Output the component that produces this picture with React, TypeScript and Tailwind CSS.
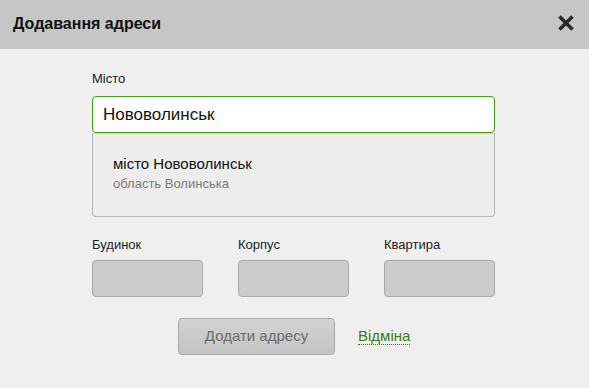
import React from 'react';

const font = { fontFamily: '"Liberation Sans", Arial, sans-serif' };

const SmallField: React.FC<{ label: string }> = ({ label }) => (
  <div className="flex flex-col w-[111px]">
    <div className="text-[13px] text-[#222] leading-[16px] h-[16px] mt-[1px]">{label}</div>
    <div className="mt-[7px] h-[37px] rounded-[4px] border border-[#a9a9a9] bg-[#cccccc]" />
  </div>
);

export default function App() {
  return (
    <div style={font} className="w-[589px] h-[388px] bg-[#efefef] flex flex-col overflow-hidden">
      <div className="h-[49px] bg-[#c6c6c6] flex items-center justify-between pl-[13px] pr-[14px]">
        <div className="text-[16px] font-bold text-[#111] mt-[-2px]">Додавання адреси</div>
        <svg width="18" height="18" viewBox="0 0 18 18" className="mt-[-3px]">
          <path d="M2.5 2.5 L15.5 15.5 M15.5 2.5 L2.5 15.5" stroke="#2a2a2a" strokeWidth="3.6" strokeLinecap="butt" />
        </svg>
      </div>
      <div className="flex flex-col pl-[92px] w-[495px] pt-[22px]">
        <div className="text-[13px] text-[#222] leading-[16px]">Місто</div>
        <div className="mt-[9px] h-[37px] rounded-[4px] border border-[#4a9a1a] bg-white flex items-center pl-[10px] text-[17px] text-[#111]">
          Нововолинськ
        </div>
        <div className="h-[84px] rounded-b-[4px] border border-[#b5b5b5] border-t-[#cfcfcf] bg-[#ededed] pl-[20px] pt-[21px] flex flex-col">
          <div className="text-[15px] text-[#111] leading-[18px]">місто Нововолинськ</div>
          <div className="text-[13px] text-[#7a7a7a] leading-[16px] mt-[3px]">область Волинська</div>
        </div>
        <div className="flex justify-between mt-[19px]">
          <SmallField label="Будинок" />
          <SmallField label="Корпус" />
          <SmallField label="Квартира" />
        </div>
        <div className="flex items-center mt-[21px] pl-[86px]">
          <div className="w-[157px] h-[37px] rounded-[4px] border border-[#a9a9a9] bg-gradient-to-b from-[#d2d2d2] to-[#c4c4c4] flex items-center justify-center text-[15px] text-[#6a6a6a]">
            Додати адресу
          </div>
          <div className="ml-[23px] text-[15px] text-[#3e7a10] border-b border-dotted border-[#3e7a10] leading-[17px] mt-[-2px]">
            Відміна
          </div>
        </div>
      </div>
    </div>
  );
}
